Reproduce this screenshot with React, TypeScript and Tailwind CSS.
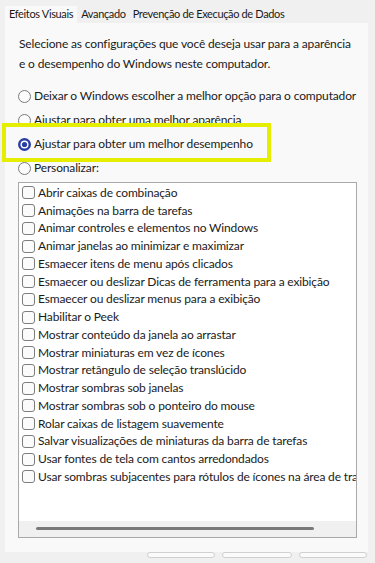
const options = [
  "Deixar o Windows escolher a melhor opção para o computador",
  "Ajustar para obter uma melhor aparência",
  "Ajustar para obter um melhor desempenho",
  "Personalizar:",
];

const effects = [
  "Abrir caixas de combinação",
  "Animações na barra de tarefas",
  "Animar controles e elementos no Windows",
  "Animar janelas ao minimizar e maximizar",
  "Esmaecer itens de menu após clicados",
  "Esmaecer ou deslizar Dicas de ferramenta para a exibição",
  "Esmaecer ou deslizar menus para a exibição",
  "Habilitar o Peek",
  "Mostrar conteúdo da janela ao arrastar",
  "Mostrar miniaturas em vez de ícones",
  "Mostrar retângulo de seleção translúcido",
  "Mostrar sombras sob janelas",
  "Mostrar sombras sob o ponteiro do mouse",
  "Rolar caixas de listagem suavemente",
  "Salvar visualizações de miniaturas da barra de tarefas",
  "Usar fontes de tela com cantos arredondados",
  "Usar sombras subjacentes para rótulos de ícones na área de trabalho",
];

function Radio({ checked }: { checked: boolean }) {
  if (checked) {
    return (
      <svg width="13" height="13" viewBox="0 0 13 13" className="shrink-0">
        <circle cx="6.5" cy="6.5" r="6.5" fill="#2a3ea6" />
        <circle cx="6.5" cy="6.5" r="4" fill="#ffffff" />
        <circle cx="6.5" cy="6.5" r="2.6" fill="#2a3ea6" />
      </svg>
    );
  }
  return <span className="h-[13px] w-[13px] shrink-0 rounded-full border border-[#7a7a7a] bg-[#fbfbfb]" />;
}

export default function App() {
  return (
    <div className="relative h-[563px] w-[375px] overflow-hidden bg-[#f0f0f0] font-['Lato','Noto_Sans',sans-serif] text-[#1b1b1b]">
      <div className="flex h-[23px] items-end pl-[5px] text-[11px] leading-[16px] tracking-[-0.35px]">
        <div className="bg-[#f9f9f9] px-[4px] pb-[1px]">Efeitos Visuais</div>
        <div className="px-[4px] pb-[1px]">Avançado</div>
        <div className="px-[3px] pb-[1px]">Prevenção de Execução de Dados</div>
      </div>

      <div className="mx-[5px] h-[529px] w-[363px] bg-[#f9f9f9] pt-[11px] text-[12px] tracking-[-0.15px]">
        <p className="whitespace-nowrap pl-[14px] leading-[20px]">
          Selecione as configurações que você deseja usar para a aparência
          <br />e o desempenho do Windows neste computador.
        </p>

        <div className="mt-[10px] flex flex-col pl-[13px]">
          {options.map((o, i) => (
            <div key={o} className="flex h-[24px] items-center gap-[3px]">
              <Radio checked={i === 2} />
              <span className="whitespace-nowrap">{o}</span>
            </div>
          ))}
        </div>

        <div className="relative ml-[13px] mt-[2px] h-[356px] w-[339px] overflow-hidden border border-[#a9a9a9] bg-white pt-px">
          {effects.map(e => (
            <div key={e} className="flex h-[17.75px] items-center gap-[3px] pl-[3px]">
              <span className="h-[13px] w-[13px] shrink-0 rounded-[3px] border border-[#7d7d7d] bg-[#fbfbfb]" />
              <span className="whitespace-nowrap">{e}</span>
            </div>
          ))}
          <div className="absolute bottom-0 left-0 right-0 h-[16px] bg-[#f0f0f0]">
            <div className="ml-[17px] mt-[6px] h-[3px] w-[278px] rounded-full bg-[#7a7a7a]" />
          </div>
        </div>
      </div>

      <div className="absolute left-[2px] top-[123px] h-[39px] w-[269px] border-[4px] border-[#e6ee00]" />

      <div className="flex gap-[7px] pl-[147px]">
        <div className="h-[6px] w-[68px] rounded-[3px] border border-[#d0d0d0] bg-[#fbfbfb]" />
        <div className="h-[6px] w-[70px] rounded-[3px] border border-[#d0d0d0] bg-[#fbfbfb]" />
        <div className="h-[6px] w-[68px] rounded-[3px] border border-[#d0d0d0] bg-[#fbfbfb]" />
      </div>
    </div>
  );
}
